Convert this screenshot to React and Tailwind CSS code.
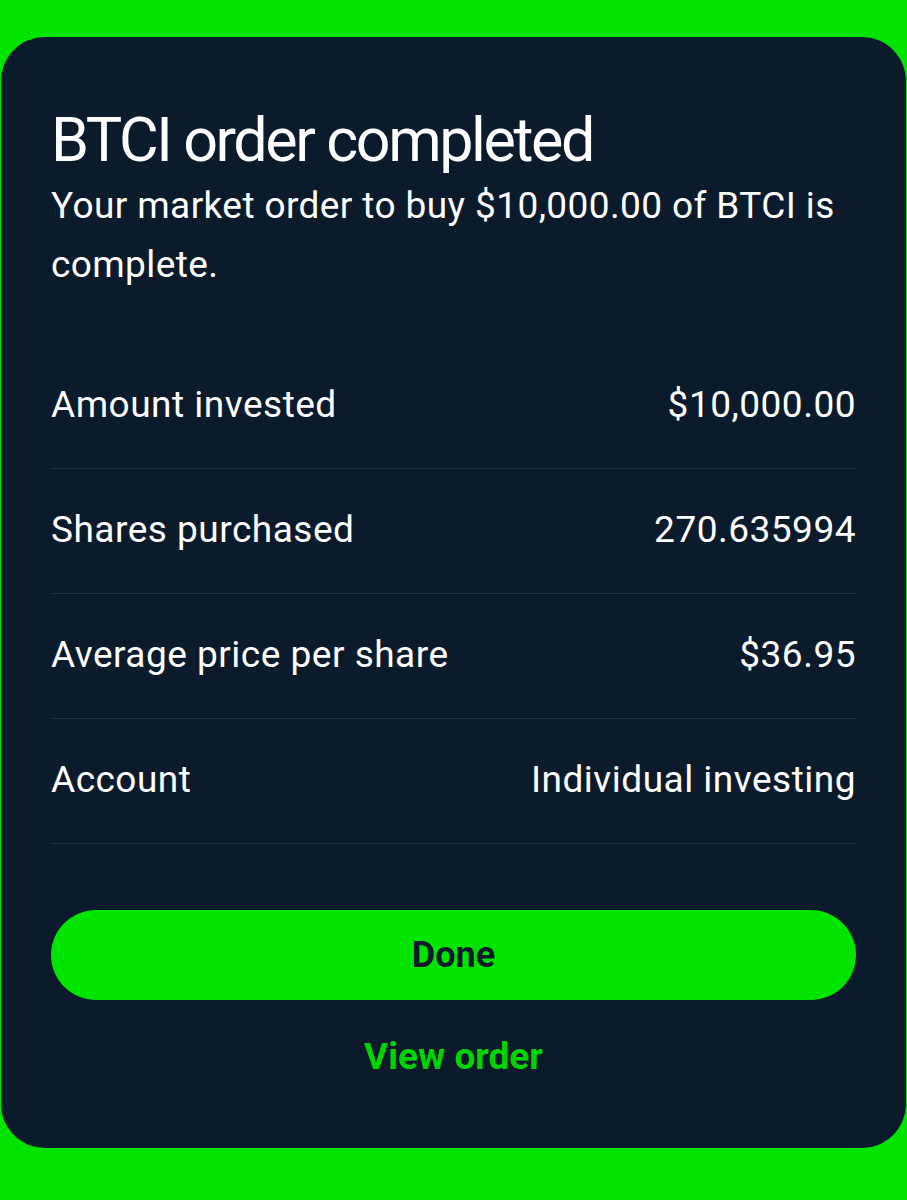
import React from "react";

const rows = [
  { label: "Amount invested", value: "$10,000.00" },
  { label: "Shares purchased", value: "270.635994" },
  { label: "Average price per share", value: "$36.95" },
  { label: "Account", value: "Individual investing" },
];

const App = () => {
  return (
    <div
      className="min-h-[1200px] bg-[#00e400] pt-[37px] pb-[52px]"
      style={{ fontFamily: "Roboto, 'Liberation Sans', sans-serif" }}
    >
      <div className="mx-[1px] h-[1111px] rounded-[44px] bg-[#0b1b2b] px-[50px] pt-[71px] text-white">
        <h1 className="text-[61px] leading-[64px] font-normal tracking-[-2.4px]">
          BTCI order completed
        </h1>
        <p className="mt-[4px] text-[37px] leading-[59px] tracking-[0.4px]">
          Your market order to buy $10,000.00 of BTCI is complete.
        </p>

        <div className="mt-[50px]">
          {rows.map((r) => (
            <div
              key={r.label}
              className="flex h-[125px] items-center justify-between border-b border-[#1f3141] pb-[2px] text-[37px] tracking-[0.5px]"
            >
              <span>{r.label}</span>
              <span>{r.value}</span>
            </div>
          ))}
        </div>

        <button className="mt-[66px] flex h-[90px] w-full items-center justify-center rounded-full bg-[#00e400] text-[36px] font-bold text-[#0b1b2b]">
          Done
        </button>
        <div className="mt-[29px] text-center text-[37px] font-bold text-[#00d400]">
          View order
        </div>
      </div>
    </div>
  );
};

export default App;
